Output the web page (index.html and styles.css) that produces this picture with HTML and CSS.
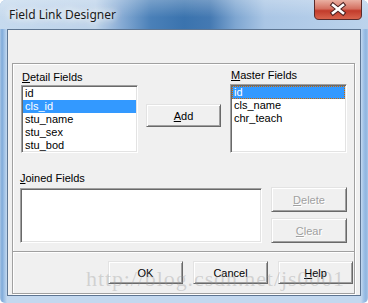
FILE: index.html
```html
<!DOCTYPE html>
<html>
<head>
<meta charset="utf-8">
<link rel="stylesheet" href="styles.css">
</head>
<body>
<div class="window">
  <div class="titlebar">
    <span class="title">Field Link Designer</span>
    <div class="close">
      <svg width="48" height="20" viewBox="0 0 48 20">
        <defs>
          <linearGradient id="cg" x1="0" y1="0" x2="0" y2="1">
            <stop offset="0" stop-color="#eab0a2"/>
            <stop offset="0.45" stop-color="#d47060"/>
            <stop offset="0.55" stop-color="#c23b2b"/>
            <stop offset="1" stop-color="#d9664f"/>
          </linearGradient>
        </defs>
        <path d="M0.5 0 V15 Q0.5 19.5 5 19.5 H43 Q47.5 19.5 47.5 15 V0" fill="url(#cg)" stroke="#5a2a2a" stroke-width="1"/>
        <path d="M19 5 L29 13 M29 5 L19 13" stroke="#4a2020" stroke-width="4.6" stroke-linecap="square"/>
        <path d="M19 5 L29 13 M29 5 L19 13" stroke="#ffffff" stroke-width="2.6" stroke-linecap="square"/>
      </svg>
    </div>
  </div>
  <div class="client">
    <div class="panel">
      <div class="top-row">
        <div class="field detail">
          <div class="label"><u>D</u>etail Fields</div>
          <div class="listbox lb-detail">
            <div class="item">id</div>
            <div class="item sel">cls_id</div>
            <div class="item">stu_name</div>
            <div class="item">stu_sex</div>
            <div class="item">stu_bod</div>
          </div>
        </div>
        <div class="btn add"><span><u>A</u>dd</span></div>
        <div class="field master">
          <div class="label"><u>M</u>aster Fields</div>
          <div class="listbox lb-master">
            <div class="item sel focus">id</div>
            <div class="item">cls_name</div>
            <div class="item">chr_teach</div>
          </div>
        </div>
      </div>
      <div class="joined-row">
        <div class="field joined">
          <div class="label"><u>J</u>oined Fields</div>
          <div class="listbox lb-joined"></div>
        </div>
        <div class="side-btns">
          <div class="btn disabled"><span><u>D</u>elete</span></div>
          <div class="btn disabled"><span><u>C</u>lear</span></div>
        </div>
      </div>
      <div class="separator"></div>
      <div class="bottom-btns">
        <div class="btn"><span>OK</span></div>
        <div class="btn"><span>Cancel</span></div>
        <div class="btn"><span><u>H</u>elp</span></div>
      </div>
    </div>
  </div>
  <div class="watermark">http://blog.csdn.net/js0001</div>
</div>
</body>
</html>
```

FILE: styles.css
```css
html, body {
  margin: 0;
  padding: 0;
  background: #ffffff;
}

.window {
  position: relative;
  width: 368px;
  height: 303px;
  box-sizing: border-box;
  background: linear-gradient(90deg, #a9c6e6 0px, #7faad9 2px, #9cbfe5 4px, #c3d8ef 7px, #c3d8ef 361px, #9cbfe5 364px, #8fb5df 366px, #a9c6e6 368px);
  border-radius: 6px 6px 5px 5px;
  overflow: hidden;
  font-family: "Liberation Sans", Arial, sans-serif;
  font-size: 11px;
  color: #000;
}

.titlebar {
  height: 29px;
  display: flex;
  align-items: flex-start;
  background:
    linear-gradient(180deg, rgba(255,255,255,0.25) 0%, rgba(255,255,255,0) 60%),
    linear-gradient(90deg, #c6daee 0%, #bdd3ea 26%, #86abd4 33%, #4a80b8 41%, #3a73ae 50%, #4479b2 57%, #7ea6d1 64%, #aac6e5 72%, #bcd3ec 100%);
}

.title {
  margin: 8px 0 0 9px;
  font-family: "Noto Sans", "Open Sans", sans-serif;
  font-size: 12px;
  line-height: 14px;
  color: #1a1a1a;
  text-shadow: 0 0 6px #fff, 0 0 10px rgba(255,255,255,0.9), 0 0 16px rgba(255,255,255,0.8);
}

.close {
  margin-left: auto;
  margin-right: 6px;
  width: 48px;
  height: 20px;
}
.close svg { display: block; }

.client {
  width: 354px;
  height: 267px;
  margin-left: 7px;
  box-sizing: border-box;
  border: 1px solid #5d7592;
  background: #f0f0f0;
  padding: 33px 5px 0 4px;
}

.panel {
  height: 231px;
  box-sizing: border-box;
  border: 1px solid #a0a0a0;
  box-shadow: inset 1px 1px 0 #ffffff, 1px 1px 0 #ffffff;
}

.top-row {
  display: flex;
  align-items: flex-start;
}

.label {
  line-height: 13px;
  height: 13px;
  white-space: nowrap;
}

.field.detail {
  margin: 7px 0 0 8px;
  width: 117px;
}
.field.detail .label { padding-left: 1px; margin-bottom: 1px; }

.field.master {
  margin: 5px 0 0 9px;
  width: 117px;
}
.field.master .label { padding-left: 1px; margin-bottom: 2px; }

.listbox {
  box-sizing: border-box;
  background: #ffffff;
  border: 1px solid;
  border-color: #a0a0a0 #ffffff #ffffff #a0a0a0;
  box-shadow: inset 1px 1px 0 #696969, inset -1px -1px 0 #e3e3e3;
  padding: 1px;
  overflow: hidden;
}

.lb-detail { height: 68px; }
.lb-master { height: 69px; }

.item {
  position: relative;
  height: 13px;
  line-height: 13px;
  padding-left: 2px;
  white-space: nowrap;
}
.item.sel {
  background: #3399ff;
  color: #ffffff;
}
.item.focus::after {
  content: "";
  position: absolute;
  inset: 0;
  background:
    repeating-linear-gradient(90deg, #cc6600 0 1px, transparent 1px 2px) top left / 100% 1px no-repeat,
    repeating-linear-gradient(90deg, #cc6600 0 1px, transparent 1px 2px) bottom left / 100% 1px no-repeat,
    repeating-linear-gradient(180deg, #cc6600 0 1px, transparent 1px 2px) top left / 1px 100% no-repeat,
    repeating-linear-gradient(180deg, #cc6600 0 1px, transparent 1px 2px) top right / 1px 100% no-repeat;
}

.btn {
  box-sizing: border-box;
  width: 75px;
  height: 23px;
  display: flex;
  align-items: center;
  justify-content: center;
  background: #f0f0f0;
  border: 1px solid;
  border-color: #e3e3e3 #696969 #696969 #e3e3e3;
  box-shadow: inset 1px 1px 0 #ffffff, inset -1px -1px 0 #a0a0a0;
  line-height: 13px;
}
.btn span { display: block; padding-top: 1px; }

.btn.add {
  margin: 40px 0 0 8px;
}

.joined-row {
  display: flex;
  align-items: flex-start;
}

.field.joined {
  margin: 19px 0 0 7px;
  width: 242px;
}
.field.joined .label { margin-bottom: 3px; }
.lb-joined { height: 55px; }

.side-btns {
  margin: 34px 0 0 9px;
  display: flex;
  flex-direction: column;
  gap: 6px;
}
.side-btns .btn {
  width: 76px;
  height: 25px;
}
.btn.disabled {
  color: #a0a0a0;
  text-shadow: 1px 1px 0 #ffffff;
}

.separator {
  margin-top: 8px;
  height: 1px;
  background: #a0a0a0;
  border-bottom: 1px solid #ffffff;
}

.bottom-btns {
  display: flex;
  gap: 10px;
  margin: 8px 0 0 95px;
}

.watermark {
  position: absolute;
  left: 86px;
  top: 266px;
  font-family: "Liberation Serif", "DejaVu Serif", serif;
  font-size: 22px;
  letter-spacing: 0.9px;
  color: rgba(150, 150, 150, 0.35);
  white-space: nowrap;
  pointer-events: none;
}
```
